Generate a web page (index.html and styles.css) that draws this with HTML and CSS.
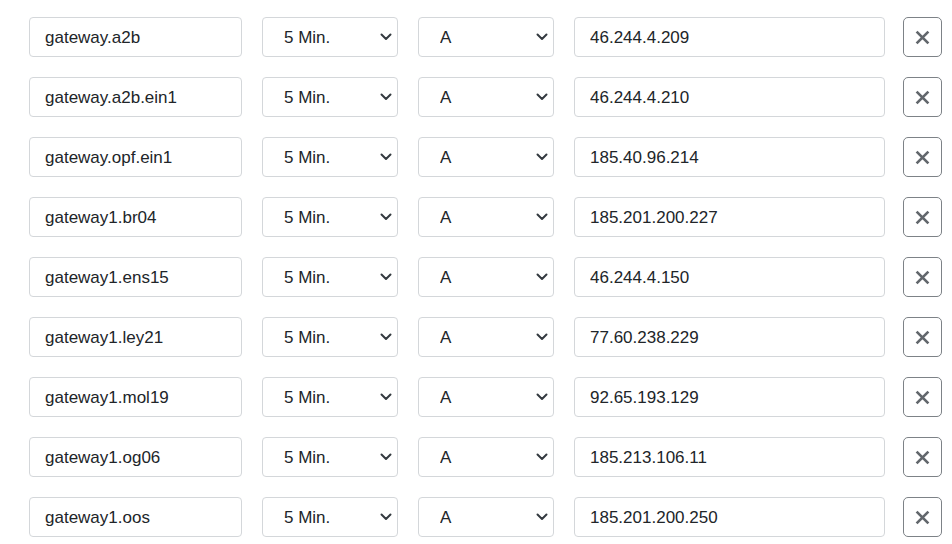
FILE: index.html
```html
<!DOCTYPE html>
<html lang="de">
<head>
<meta charset="utf-8">
<title>DNS records</title>
<link rel="stylesheet" href="styles.css">
</head>
<body>
<div class="records">
  <div class="row">
    <input class="field name" type="text" value="gateway.a2b">
    <select class="field ttl"><option>5 Min.</option></select>
    <select class="field type"><option>A</option></select>
    <input class="field value" type="text" value="46.244.4.209">
    <button class="remove" type="button" aria-label="Entfernen"><svg viewBox="0 0 14 14" width="14" height="14"><path d="M1.5 1.5l11 11M12.5 1.5l-11 11"/></svg></button>
  </div>
  <div class="row">
    <input class="field name" type="text" value="gateway.a2b.ein1">
    <select class="field ttl"><option>5 Min.</option></select>
    <select class="field type"><option>A</option></select>
    <input class="field value" type="text" value="46.244.4.210">
    <button class="remove" type="button" aria-label="Entfernen"><svg viewBox="0 0 14 14" width="14" height="14"><path d="M1.5 1.5l11 11M12.5 1.5l-11 11"/></svg></button>
  </div>
  <div class="row">
    <input class="field name" type="text" value="gateway.opf.ein1">
    <select class="field ttl"><option>5 Min.</option></select>
    <select class="field type"><option>A</option></select>
    <input class="field value" type="text" value="185.40.96.214">
    <button class="remove" type="button" aria-label="Entfernen"><svg viewBox="0 0 14 14" width="14" height="14"><path d="M1.5 1.5l11 11M12.5 1.5l-11 11"/></svg></button>
  </div>
  <div class="row">
    <input class="field name" type="text" value="gateway1.br04">
    <select class="field ttl"><option>5 Min.</option></select>
    <select class="field type"><option>A</option></select>
    <input class="field value" type="text" value="185.201.200.227">
    <button class="remove" type="button" aria-label="Entfernen"><svg viewBox="0 0 14 14" width="14" height="14"><path d="M1.5 1.5l11 11M12.5 1.5l-11 11"/></svg></button>
  </div>
  <div class="row">
    <input class="field name" type="text" value="gateway1.ens15">
    <select class="field ttl"><option>5 Min.</option></select>
    <select class="field type"><option>A</option></select>
    <input class="field value" type="text" value="46.244.4.150">
    <button class="remove" type="button" aria-label="Entfernen"><svg viewBox="0 0 14 14" width="14" height="14"><path d="M1.5 1.5l11 11M12.5 1.5l-11 11"/></svg></button>
  </div>
  <div class="row">
    <input class="field name" type="text" value="gateway1.ley21">
    <select class="field ttl"><option>5 Min.</option></select>
    <select class="field type"><option>A</option></select>
    <input class="field value" type="text" value="77.60.238.229">
    <button class="remove" type="button" aria-label="Entfernen"><svg viewBox="0 0 14 14" width="14" height="14"><path d="M1.5 1.5l11 11M12.5 1.5l-11 11"/></svg></button>
  </div>
  <div class="row">
    <input class="field name" type="text" value="gateway1.mol19">
    <select class="field ttl"><option>5 Min.</option></select>
    <select class="field type"><option>A</option></select>
    <input class="field value" type="text" value="92.65.193.129">
    <button class="remove" type="button" aria-label="Entfernen"><svg viewBox="0 0 14 14" width="14" height="14"><path d="M1.5 1.5l11 11M12.5 1.5l-11 11"/></svg></button>
  </div>
  <div class="row">
    <input class="field name" type="text" value="gateway1.og06">
    <select class="field ttl"><option>5 Min.</option></select>
    <select class="field type"><option>A</option></select>
    <input class="field value" type="text" value="185.213.106.11">
    <button class="remove" type="button" aria-label="Entfernen"><svg viewBox="0 0 14 14" width="14" height="14"><path d="M1.5 1.5l11 11M12.5 1.5l-11 11"/></svg></button>
  </div>
  <div class="row">
    <input class="field name" type="text" value="gateway1.oos">
    <select class="field ttl"><option>5 Min.</option></select>
    <select class="field type"><option>A</option></select>
    <input class="field value" type="text" value="185.201.200.250">
    <button class="remove" type="button" aria-label="Entfernen"><svg viewBox="0 0 14 14" width="14" height="14"><path d="M1.5 1.5l11 11M12.5 1.5l-11 11"/></svg></button>
  </div>
</div>
</body>
</html>
```
FILE: styles.css
```css
html, body {
  margin: 0;
  padding: 0;
  background: #fff;
}

body {
  font-family: "Liberation Sans", Arial, sans-serif;
  color: #212529;
  overflow: hidden;
}

.records {
  display: flex;
  flex-direction: column;
  gap: 20px;
  padding: 17px 0 0 29px;
}

.row {
  display: flex;
  align-items: center;
  gap: 20px;
}

.field {
  box-sizing: border-box;
  height: 40px;
  margin: 0;
  border: 1px solid #d4d7da;
  border-radius: 4px;
  background-color: #fff;
  font-family: "Liberation Sans", Arial, sans-serif;
  font-size: 17px;
  color: #212529;
  outline: none;
}

input.field {
  padding: 1px 15px 0;
}

.name { width: 213px; }
.value { width: 311px; padding-left: 16px; }

select.field {
  -webkit-appearance: none;
  appearance: none;
  padding: 1px 24px 0 21px;
  background-image: url("data:image/svg+xml,%3Csvg xmlns='http://www.w3.org/2000/svg' viewBox='0 0 12 8'%3E%3Cpath d='M1.5 1.5 6 6l4.5-4.5' fill='none' stroke='%23343a40' stroke-width='2' stroke-linecap='round' stroke-linejoin='round'/%3E%3C/svg%3E");
  background-repeat: no-repeat;
  background-size: 12px 8px;
  background-position: right 5px center;
}

.ttl { width: 136px; }
.type { width: 136px; }

.remove {
  box-sizing: border-box;
  width: 39px;
  height: 40px;
  margin: 0 0 0 -2px;
  padding: 0;
  display: flex;
  align-items: center;
  justify-content: center;
  border: 1px solid #7d8287;
  border-radius: 5px;
  background: #fff;
}

.remove svg {
  display: block;
  width: 15px;
  height: 15px;
  fill: none;
  stroke: #62676c;
  stroke-width: 2.5;
  stroke-linecap: butt;
}
```
